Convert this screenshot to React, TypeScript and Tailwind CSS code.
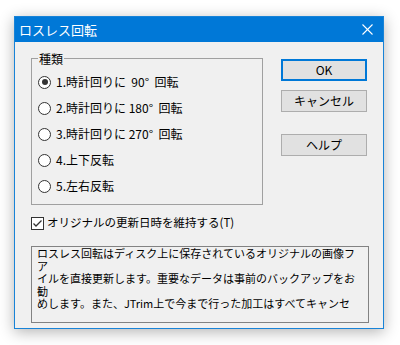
import React, { useState } from 'react'

const FONT = '"Noto Sans CJK JP", "Noto Sans", sans-serif'

const options = [
  '1.時計回りに  90°  回転',
  '2.時計回りに 180°  回転',
  '3.時計回りに 270°  回転',
  '4.上下反転',
  '5.左右反転',
]

const infoLines = [
  'ロスレス回転はディスク上に保存されているオリジナルの画像フ',
  'ア',
  'イルを直接更新します。重要なデータは事前のバックアップをお',
  '勧',
  'めします。また、JTrim上で今まで行った加工はすべてキャンセ',
]

function Radio({ checked }: { checked: boolean }) {
  return (
    <span className="w-[13px] h-[13px] rounded-full border border-[#333333] bg-white flex items-center justify-center shrink-0">
      {checked && <span className="w-[6px] h-[6px] rounded-full bg-[#333333]" />}
    </span>
  )
}

function Button({ label, primary = false }: { label: string; primary?: boolean }) {
  return (
    <button
      className={
        primary
          ? 'w-[86px] h-[22px] bg-[#e1e1e1] border-2 border-[#0078d7] text-[12px] text-black flex items-center justify-center'
          : 'w-[86px] h-[22px] bg-[#e1e1e1] border border-[#adadad] text-[12px] text-black flex items-center justify-center'
      }
    >
      {label}
    </button>
  )
}

export default function App() {
  const [selected, setSelected] = useState(0)
  const [keepDate, setKeepDate] = useState(true)

  return (
    <div className="w-[400px] h-[345px] bg-white pl-[14px] pt-[16px]" style={{ fontFamily: FONT }}>
      <div className="w-[370px] h-[313px] border border-[#1883d7] bg-[#f0f0f0] flex flex-col shadow-[0_3px_14px_rgba(0,0,0,0.3)]">
        {/* Title bar */}
        <div className="h-[25px] bg-[#0078d7] flex items-center justify-between pl-[4px] pr-[10px] shrink-0">
          <span className="text-white text-[13px] leading-none">ロスレス回転</span>
          <svg width="11" height="11" viewBox="0 0 11 11" stroke="white" strokeWidth="1.1">
            <line x1="0.5" y1="0.5" x2="10.5" y2="10.5" />
            <line x1="10.5" y1="0.5" x2="0.5" y2="10.5" />
          </svg>
        </div>

        <div className="flex flex-col pl-[16px] pt-[9px]">
          <div className="flex">
            {/* Group box */}
            <fieldset className="w-[232px] h-[154px] border border-[#a0a0a0] pl-[6px]">
              <legend className="px-[1px] text-[12px] leading-[15px] text-black">種類</legend>
              <div className="flex flex-col pt-[3px]">
                {options.map((label, i) => (
                  <label
                    key={label}
                    className="h-[26px] flex items-center gap-[5px] text-[12px] text-black cursor-default"
                    onClick={() => setSelected(i)}
                  >
                    <Radio checked={selected === i} />
                    <span className="whitespace-pre leading-none">{label}</span>
                  </label>
                ))}
              </div>
            </fieldset>

            {/* Buttons */}
            <div className="flex flex-col ml-[18px] pt-[8px]">
              <Button label="OK" primary />
              <div className="mt-[9px]">
                <Button label="キャンセル" />
              </div>
              <div className="mt-[22px]">
                <Button label="ヘルプ" />
              </div>
            </div>
          </div>

          {/* Checkbox */}
          <label
            className="flex items-center gap-[3px] mt-[11px] h-[14px] text-[11.5px] text-black cursor-default"
            onClick={() => setKeepDate(!keepDate)}
          >
            <span className="w-[13px] h-[13px] border border-[#333333] bg-white flex items-center justify-center shrink-0">
              {keepDate && (
                <svg width="11" height="11" viewBox="0 0 11 11" fill="none" stroke="#333333" strokeWidth="1.3">
                  <polyline points="1.5,5.5 4,8 9.5,2.5" />
                </svg>
              )}
            </span>
            <span className="leading-none">オリジナルの更新日時を維持する(T)</span>
          </label>

          {/* Info box */}
          <div className="mt-[16px] w-[338px] h-[77px] border border-[#828282] pl-[5px] overflow-hidden">
            {infoLines.map((line, i) => (
              <div key={i} className="text-[11px] leading-[12.5px] text-black whitespace-nowrap">
                {line}
              </div>
            ))}
          </div>
        </div>
      </div>
    </div>
  )
}
